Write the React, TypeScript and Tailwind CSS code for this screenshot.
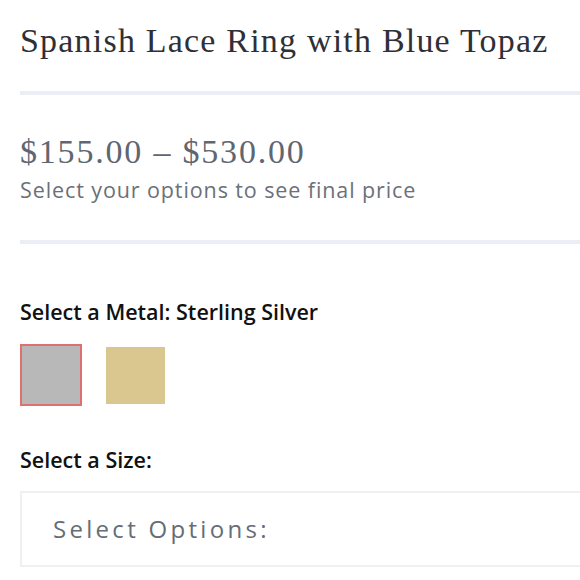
export default function App() {
  return (
    <div className="min-h-[580px] w-[580px] overflow-hidden bg-white pl-5">
      <h1 className="pt-[23px] font-['Liberation_Serif',serif] text-[34px] leading-[36px] tracking-[1.2px] text-[#2f3037]">
        Spanish Lace Ring with Blue Topaz
      </h1>
      <div className="mt-[32px] h-[4px] w-[600px] bg-[#eceef5]" />
      <div className="pt-[39px] font-['Liberation_Serif',serif] text-[34px] leading-[36px] tracking-[1.8px] text-[#5f6671]">
        $155.00 – $530.00
      </div>
      <div className="mt-[8px] font-['Open_Sans',sans-serif] text-[21.5px] leading-[24px] tracking-[0.9px] text-[#6b7079]">
        Select your options to see final price
      </div>
      <div className="mt-[38px] h-[4px] w-[600px] bg-[#eceef5]" />
      <div className="mt-[56px] font-['Open_Sans',sans-serif] text-[21.5px] font-semibold leading-[24px] text-[#111]">
        Select a Metal: Sterling Silver
      </div>
      <div className="mt-[20px] flex items-center gap-[24px]">
        <button className="h-[62px] w-[62px] border-2 border-[#e07070] bg-[#b8b8b8]" />
        <button className="h-[57px] w-[59px] bg-[#dac68f]" />
      </div>
      <div className="mt-[42px] font-['Open_Sans',sans-serif] text-[21.5px] font-semibold leading-[24px] text-[#111]">
        Select a Size:
      </div>
      <div className="mt-[19px] flex h-[76px] w-[600px] items-center border-2 border-[#eef0f3] pl-[31px]">
        <span className="font-['Open_Sans',sans-serif] text-[24px] tracking-[3.3px] text-[#666d77]">
          Select Options:
        </span>
      </div>
    </div>
  )
}
